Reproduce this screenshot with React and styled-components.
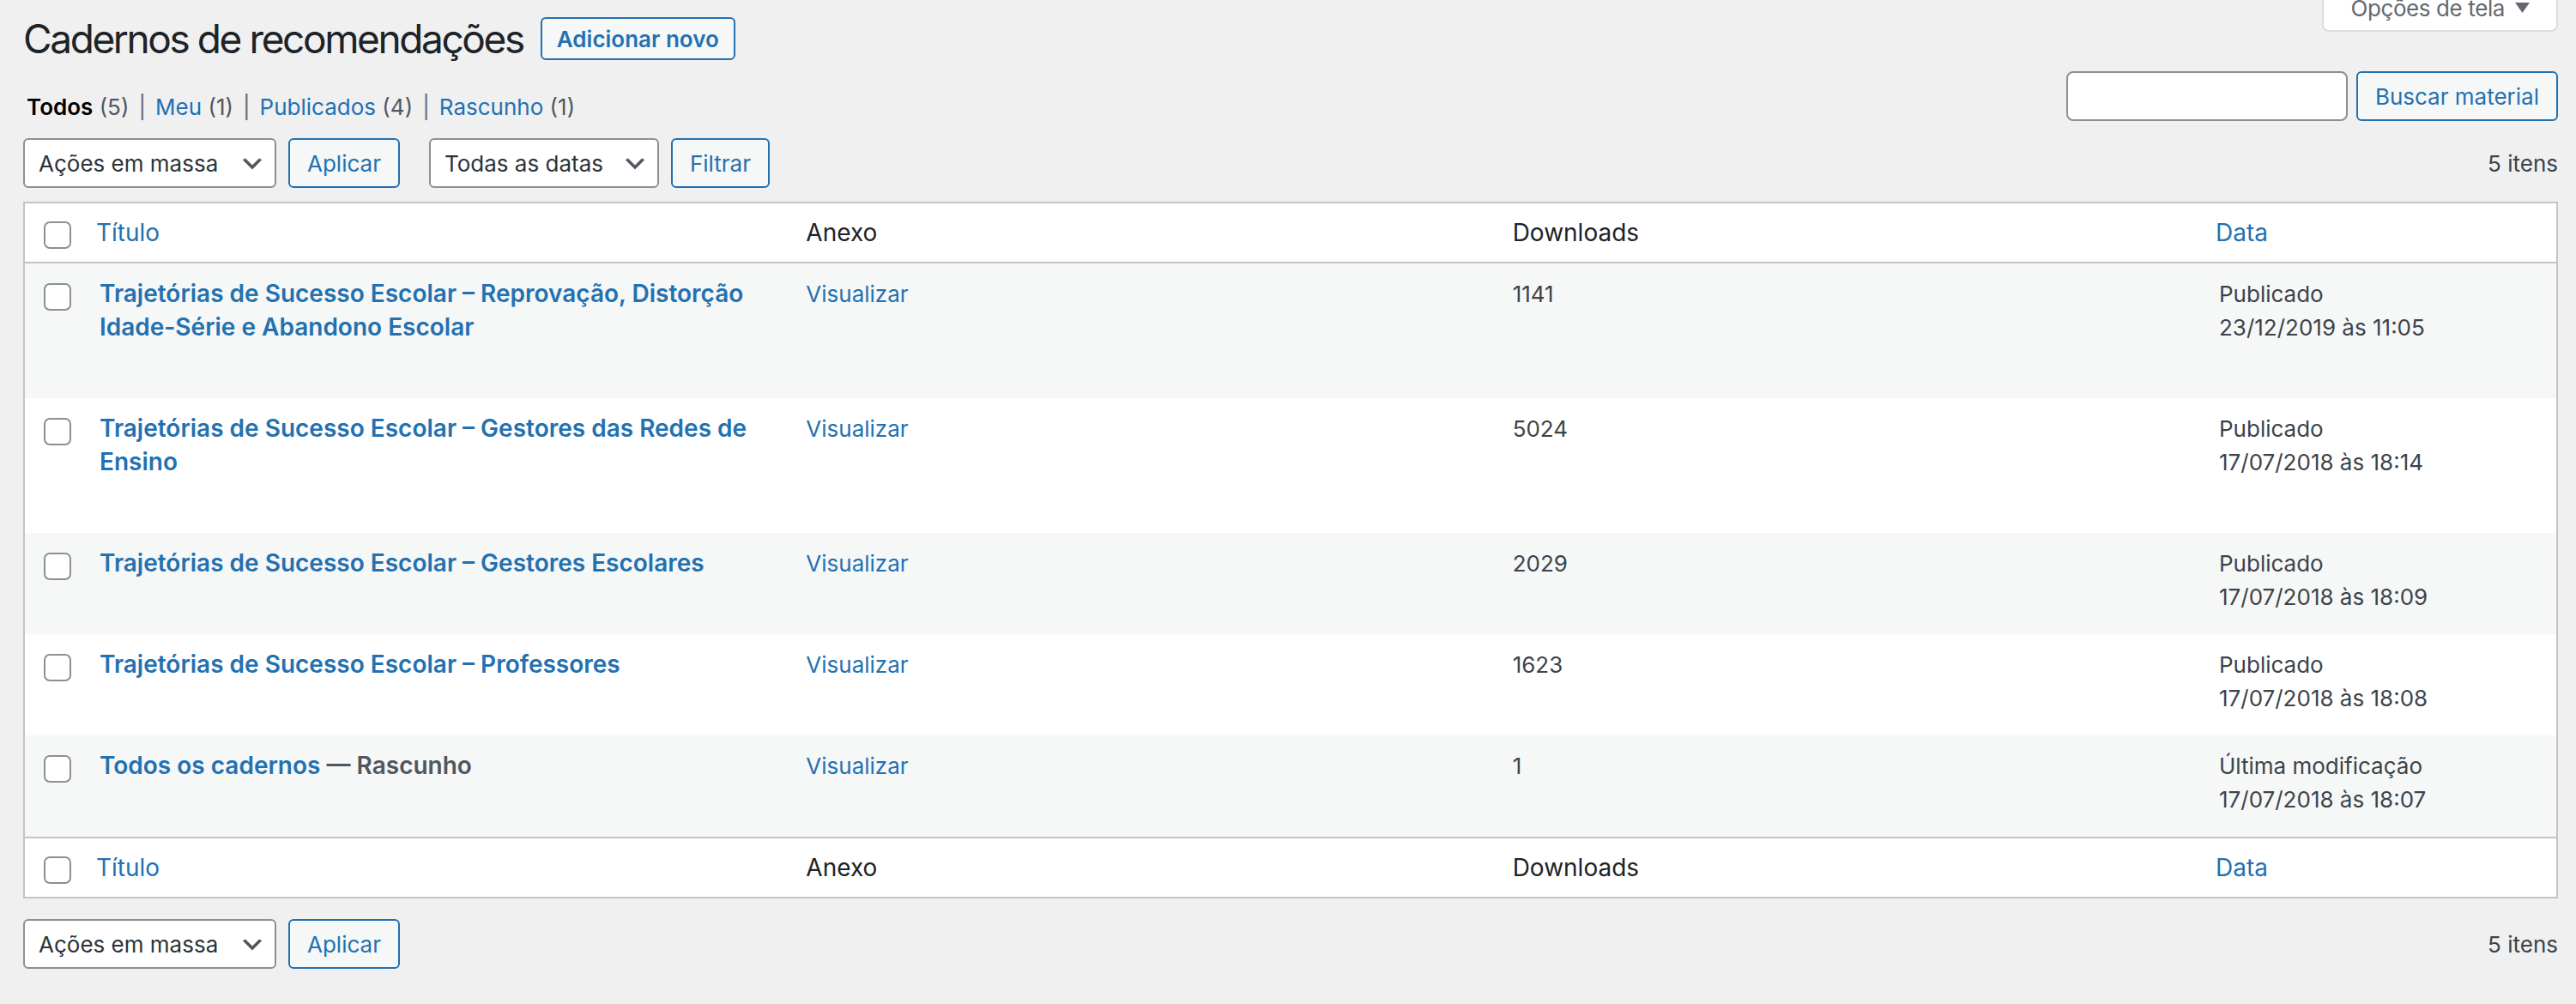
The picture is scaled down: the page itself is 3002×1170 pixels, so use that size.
import React from 'react';
import styled, { createGlobalStyle } from 'styled-components';

const GlobalStyle = createGlobalStyle`
  html, body { margin: 0; padding: 0; }
  body {
    background: #f0f0f1;
    color: #3c434a;
    font-family: Inter, "Noto Sans", "Liberation Sans", sans-serif;
    font-size: 26px;
  }
  * { box-sizing: border-box; }
`;

const COLS = '67px 1fr 1fr 1fr 14%';

const Wrap = styled.div`
  position: relative;
  padding: 15px 21px 40px 27px;
`;

const ScreenOptionsTab = styled.button`
  position: absolute;
  top: -30px;
  right: 21px;
  height: 67px;
  display: flex;
  align-items: flex-end;
  gap: 12px;
  padding: 0 31px 6px 31px;
  background: #fff;
  border: 2px solid #dcdcde;
  border-top: none;
  border-radius: 0 0 8px 8px;
  color: #646970;
  font: inherit;
  font-size: 26px;
  line-height: 39px;
  letter-spacing: -0.4px;
`;

const TabArrow = styled.svg`
  width: 17px;
  height: 12px;
  margin-bottom: 14px;
  flex: none;
`;

const HeadingRow = styled.div`
  display: flex;
  align-items: center;
  gap: 20px;
  height: 60px;
`;

const PageTitle = styled.h1`
  margin: 0;
  font-size: 46px;
  font-weight: 400;
  line-height: 60px;
  letter-spacing: -2.4px;
  color: #1d2327;
`;

const TitleAction = styled.a`
  display: inline-flex;
  align-items: center;
  height: 50px;
  padding: 0 17px;
  border: 2px solid #2271b1;
  border-radius: 6px;
  background: #f6f7f7;
  color: #2271b1;
  font-size: 26px;
  font-weight: 600;
  text-decoration: none;
`;

const FilterBar = styled.div`
  display: flex;
  justify-content: space-between;
  align-items: flex-start;
  height: 58px;
  margin-top: 8px;
`;

const StatusLinks = styled.ul`
  display: flex;
  margin: 22px 0 0 4px;
  padding: 0;
  list-style: none;
  font-size: 26px;
  line-height: 39px;
  color: #646970;
`;

const StatusItem = styled.li`
  white-space: pre;
`;

const StatusLink = styled.a`
  color: ${p => (p.$current ? '#000' : '#2271b1')};
  font-weight: ${p => (p.$current ? 600 : 400)};
  text-decoration: none;
`;

const Count = styled.span`
  color: #50575e;
`;

const Sep = styled.span`
  display: inline-block;
  padding: 0 11px;
  color: #646970;
`;

const SearchBox = styled.div`
  display: flex;
  gap: 10px;
`;

const SearchInput = styled.input`
  width: 328px;
  height: 58px;
  border: 2px solid #8c8f94;
  border-radius: 8px;
  background: #fff;
  font: inherit;
  padding: 0 16px;
`;

const Button = styled.button`
  height: 58px;
  padding: 0 20px;
  border: 2px solid #2271b1;
  border-radius: 6px;
  background: #f6f7f7;
  color: #2271b1;
  font: inherit;
  font-size: 26px;
  white-space: nowrap;
`;

const Tablenav = styled.div`
  display: flex;
  align-items: center;
  height: 58px;
  margin-top: ${p => p.$mt}px;
`;

const Group = styled.div`
  display: flex;
  align-items: center;
  gap: 14px;
  margin-right: 34px;
`;

const SelectBox = styled.div`
  position: relative;
  display: flex;
  align-items: center;
  width: ${p => p.$w}px;
  height: 58px;
  padding: 0 48px 0 16px;
  border: 2px solid #8c8f94;
  border-radius: 6px;
  background: #fff;
  color: #2c3338;
  font-size: 26px;
  white-space: nowrap;
`;

const Chevron = styled.svg`
  position: absolute;
  right: 10px;
  top: 50%;
  margin-top: -15px;
  width: 32px;
  height: 32px;
`;

const DisplayingNum = styled.div`
  margin-left: auto;
  color: #3c434a;
  font-size: 26px;
`;

const ListTable = styled.div`
  margin-top: 16px;
  border: 2px solid #c3c4c7;
  background: #fff;
`;

const HeadRow = styled.div`
  display: grid;
  grid-template-columns: ${COLS};
  height: 70px;
  ${p => (p.$foot ? 'border-top: 2px solid #c3c4c7;' : 'border-bottom: 2px solid #c3c4c7;')}
  background: #fff;
`;

const HeadCell = styled.div`
  display: flex;
  align-items: center;
  padding: 0 ${p => (p.$sortable ? 16 : 20)}px;
  font-size: 28px;
  color: #1d2327;
`;

const HeadLink = styled.a`
  color: #2271b1;
  text-decoration: none;
`;

const CheckCell = styled.div`
  padding: ${p => p.$top}px 0 0 22px;
`;

const Checkbox = styled.span`
  display: block;
  width: 32px;
  height: 32px;
  border: 2px solid #8c8f94;
  border-radius: 7px;
  background: #fff;
`;

const Row = styled.div`
  display: grid;
  grid-template-columns: ${COLS};
  background: ${p => (p.$striped ? '#f6f7f7' : '#fff')};
`;

const Cell = styled.div`
  padding: 16px 20px;
  font-size: 26px;
  line-height: 39px;
  color: #3c434a;
`;

const RowTitle = styled.div`
  font-size: 28px;
  font-weight: 600;
  line-height: 39px;
`;

const TitleLink = styled.a`
  color: #2271b1;
  text-decoration: none;
`;

const PostState = styled.span`
  color: #50575e;
`;

const RowActionsSpace = styled.div`
  height: 47px;
`;

const CellLink = styled.a`
  color: #2271b1;
  text-decoration: none;
`;

const ChevronIcon = () => (
  <Chevron viewBox="0 0 20 20">
    <path d="M5 6l5 5 5-5 2 1-7 7-7-7z" fill="#50575e" />
  </Chevron>
);

const Select = ({ w, children }) => (
  <SelectBox $w={w}>
    {children}
    <ChevronIcon />
  </SelectBox>
);

const rows = [
  {
    title: 'Trajetórias de Sucesso Escolar – Reprovação, Distorção Idade-Série e Abandono Escolar',
    downloads: '1141',
    status: 'Publicado',
    date: '23/12/2019 às 11:05',
  },
  {
    title: 'Trajetórias de Sucesso Escolar – Gestores das Redes de Ensino',
    downloads: '5024',
    status: 'Publicado',
    date: '17/07/2018 às 18:14',
  },
  {
    title: 'Trajetórias de Sucesso Escolar – Gestores Escolares',
    downloads: '2029',
    status: 'Publicado',
    date: '17/07/2018 às 18:09',
  },
  {
    title: 'Trajetórias de Sucesso Escolar – Professores',
    downloads: '1623',
    status: 'Publicado',
    date: '17/07/2018 às 18:08',
  },
  {
    title: 'Todos os cadernos',
    state: 'Rascunho',
    downloads: '1',
    status: 'Última modificação',
    date: '17/07/2018 às 18:07',
  },
];

const statuses = [
  { label: 'Todos', count: 5, current: true },
  { label: 'Meu', count: 1 },
  { label: 'Publicados', count: 4 },
  { label: 'Rascunho', count: 1 },
];

const ColumnHeaders = ({ foot }) => (
  <HeadRow $foot={foot}>
    <CheckCell $top={21}>
      <Checkbox />
    </CheckCell>
    <HeadCell $sortable>
      <HeadLink>Título</HeadLink>
    </HeadCell>
    <HeadCell>Anexo</HeadCell>
    <HeadCell>Downloads</HeadCell>
    <HeadCell $sortable>
      <HeadLink>Data</HeadLink>
    </HeadCell>
  </HeadRow>
);

const BulkActions = () => (
  <Group>
    <Select w={295}>Ações em massa</Select>
    <Button>Aplicar</Button>
  </Group>
);

export default function App() {
  return (
    <>
      <GlobalStyle />
      <Wrap>
        <ScreenOptionsTab>
          Opções de tela
          <TabArrow viewBox="0 0 17 12">
            <polygon points="0,0 17,0 8.5,12" fill="#646970" />
          </TabArrow>
        </ScreenOptionsTab>

        <HeadingRow>
          <PageTitle>Cadernos de recomendações</PageTitle>
          <TitleAction>Adicionar novo</TitleAction>
        </HeadingRow>

        <FilterBar>
          <StatusLinks>
            {statuses.map((s, i) => (
              <StatusItem key={s.label}>
                <StatusLink $current={s.current}>{s.label}</StatusLink>{' '}
                <Count>({s.count})</Count>
                {i < statuses.length - 1 && <Sep>|</Sep>}
              </StatusItem>
            ))}
          </StatusLinks>
          <SearchBox>
            <SearchInput type="search" />
            <Button>Buscar material</Button>
          </SearchBox>
        </FilterBar>

        <Tablenav $mt={20}>
          <BulkActions />
          <Group>
            <Select w={268}>Todas as datas</Select>
            <Button>Filtrar</Button>
          </Group>
          <DisplayingNum>5 itens</DisplayingNum>
        </Tablenav>

        <ListTable>
          <ColumnHeaders />
          {rows.map((r, i) => (
            <Row key={r.title} $striped={i % 2 === 0}>
              <CheckCell $top={23}>
                <Checkbox />
              </CheckCell>
              <Cell>
                <RowTitle>
                  <TitleLink>{r.title}</TitleLink>
                  {r.state && <PostState> — {r.state}</PostState>}
                </RowTitle>
                <RowActionsSpace />
              </Cell>
              <Cell>
                <CellLink>Visualizar</CellLink>
              </Cell>
              <Cell>{r.downloads}</Cell>
              <Cell>
                {r.status}
                <br />
                {r.date}
              </Cell>
            </Row>
          ))}
          <ColumnHeaders foot />
        </ListTable>

        <Tablenav $mt={24}>
          <BulkActions />
          <DisplayingNum>5 itens</DisplayingNum>
        </Tablenav>
      </Wrap>
    </>
  );
}
